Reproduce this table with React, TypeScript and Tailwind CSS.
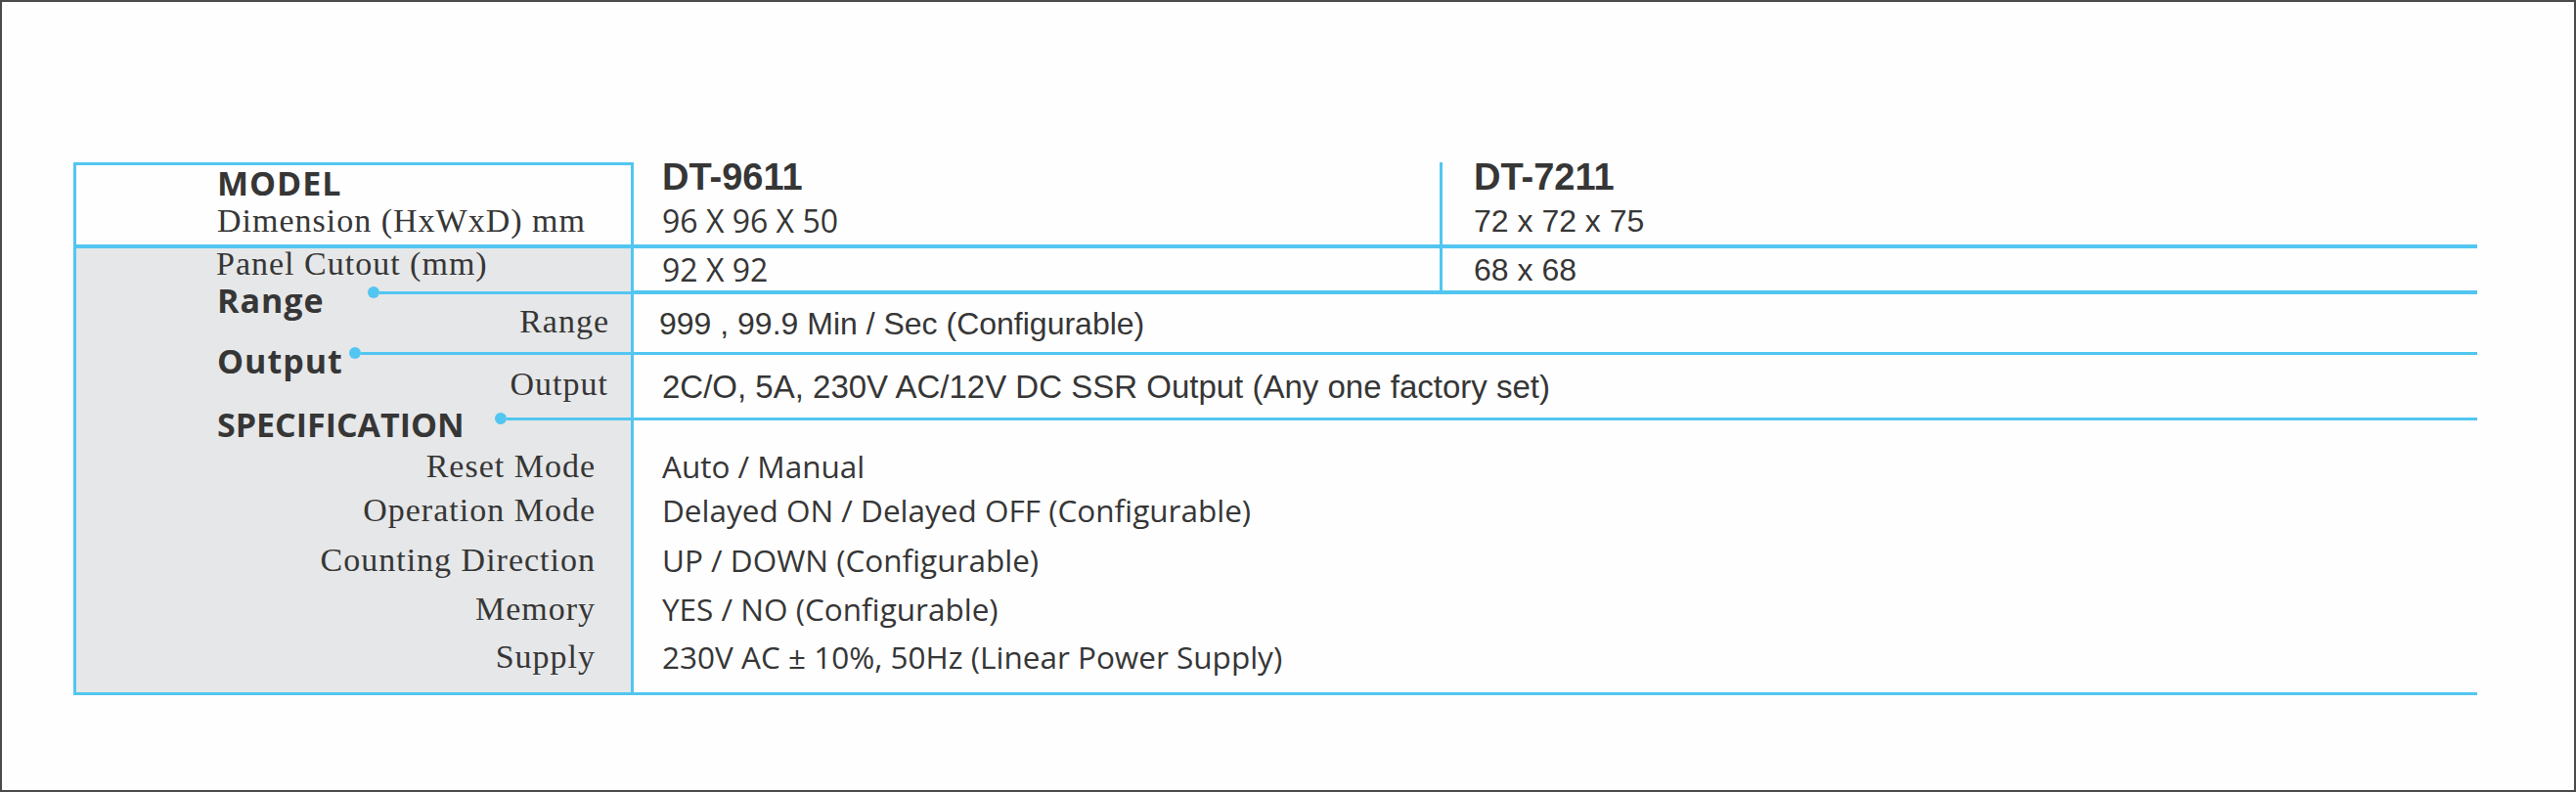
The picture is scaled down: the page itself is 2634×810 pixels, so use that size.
import React from "react";

const serif =
  "font-['Liberation_Serif','Times_New_Roman',serif] text-[34px] tracking-[1px] text-[#363636] leading-none whitespace-nowrap";
const boldSans =
  "font-['Open_Sans',sans-serif] font-bold text-[34px] tracking-[1px] text-[#363636] leading-none whitespace-nowrap";
const boldSansTight =
  "font-['Open_Sans',sans-serif] font-bold text-[34px] tracking-[0px] text-[#363636] leading-none whitespace-nowrap";
const arial =
  "font-['Liberation_Sans',Arial,sans-serif] text-[32px] text-[#363636] leading-none whitespace-nowrap";
const arialWide =
  "font-['Liberation_Sans',Arial,sans-serif] text-[33px] text-[#363636] leading-none whitespace-nowrap";
const arialBold =
  "font-['Liberation_Sans',Arial,sans-serif] font-bold text-[38px] text-[#363636] leading-none whitespace-nowrap";
const open =
  "font-['Open_Sans',sans-serif] text-[31.5px] text-[#363636] leading-none whitespace-nowrap";
const openDim =
  "font-['Open_Sans',sans-serif] text-[32px] text-[#363636] leading-none whitespace-nowrap";

function Header({
  label,
  width,
  lift,
  textClass,
}: {
  label: string;
  width: string;
  lift: string;
  textClass: string;
}) {
  return (
    <div className="h-[24px] flex items-center pl-[144px]">
      <div className={`${width} shrink-0 ${textClass}`}>{label}</div>
      <div className={`flex-1 flex items-center ${lift}`}>
        <span className="w-[12px] h-[12px] rounded-full bg-[#52c6f0] shrink-0" />
        <span className="flex-1 h-[3px] bg-[#52c6f0]" />
      </div>
    </div>
  );
}

export default function App() {
  return (
    <div className="w-[2634px] h-[810px] border-2 border-[#4a4a4a] bg-[#fefefe] pl-[73px] pt-[164px]">
      <div className="flex h-[545px]">
        {/* Label column */}
        <div className="w-[573px] shrink-0 border-[3px] border-[#52c6f0] flex flex-col">
          <div className="h-[85px] shrink-0 border-b-4 border-[#52c6f0] bg-[#fefefe] pl-[144px] flex flex-col">
            <div className={`mt-[6px] h-[24px] flex items-center ${boldSans}`}>MODEL</div>
            <div className={`mt-[15px] h-[24px] flex items-center ${serif}`}>Dimension (HxWxD) mm</div>
          </div>
          <div className="flex-1 bg-[#e6e7e8] flex flex-col">
            <div className={`mt-[4px] h-[24px] flex items-center pl-[143px] ${serif}`}>Panel Cutout (mm)</div>
            <div className="mt-[13px]">
              <Header label="Range" width="w-[154px]" lift="mb-[16px]" textClass={boldSans} />
            </div>
            <div className={`-mt-[2px] h-[24px] flex items-center justify-end pr-[22px] ${serif}`}>Range</div>
            <div className="mt-[16px]">
              <Header label="Output" width="w-[135px]" lift="mb-[16px]" textClass={boldSans} />
            </div>
            <div className={`h-[24px] flex items-center justify-end pr-[23px] ${serif}`}>Output</div>
            <div className="mt-[17px]">
              <Header label="SPECIFICATION" width="w-[284px]" lift="mb-[12px]" textClass={boldSansTight} />
            </div>
            <div className={`mt-[19px] h-[24px] flex items-center justify-end pr-[36px] ${serif}`}>Reset Mode</div>
            <div className={`mt-[21px] h-[24px] flex items-center justify-end pr-[36px] ${serif}`}>Operation Mode</div>
            <div className={`mt-[27px] h-[24px] flex items-center justify-end pr-[36px] ${serif}`}>Counting Direction</div>
            <div className={`mt-[26px] h-[24px] flex items-center justify-end pr-[36px] ${serif}`}>Memory</div>
            <div className={`mt-[25px] h-[24px] flex items-center justify-end pr-[36px] ${serif}`}>Supply</div>
          </div>
        </div>

        {/* Values */}
        <div className="w-[1885px] shrink-0 flex flex-col">
          <div className="h-[88px] shrink-0 flex border-b-4 border-[#52c6f0]">
            <div className="w-[827px] shrink-0 border-r-[3px] border-[#52c6f0] pl-[29px] flex flex-col">
              <div className={`mt-[3px] h-[24px] flex items-center ${arialBold}`}>DT-9611</div>
              <div className={`mt-[21px] h-[24px] flex items-center ${openDim}`}>96 X 96 X 50</div>
            </div>
            <div className="flex-1 pl-[32px] flex flex-col">
              <div className={`mt-[3px] h-[24px] flex items-center ${arialBold}`}>DT-7211</div>
              <div className={`mt-[21px] h-[24px] flex items-center ${arial}`}>72 x 72 x 75</div>
            </div>
          </div>
          <div className="h-[47px] shrink-0 flex border-b-4 border-[#52c6f0]">
            <div className={`w-[827px] shrink-0 border-r-[3px] border-[#52c6f0] pl-[29px] flex items-center ${openDim}`}>92 X 92</div>
            <div className={`flex-1 pl-[32px] flex items-center ${arial}`}>68 x 68</div>
          </div>
          <div className={`h-[62px] shrink-0 border-b-[3px] border-[#52c6f0] pl-[26px] flex items-center ${arial}`}>
            999 , 99.9 Min / Sec (Configurable)
          </div>
          <div className={`h-[67px] shrink-0 border-b-[3px] border-[#52c6f0] pl-[29px] flex items-center ${arialWide}`}>
            2C/O, 5A, 230V AC/12V DC SSR Output (Any one factory set)
          </div>
          <div className="h-[281px] shrink-0 border-b-[3px] border-[#52c6f0] pl-[29px] flex flex-col">
            <div className={`mt-[35px] h-[24px] flex items-center ${open}`}>Auto / Manual</div>
            <div className={`mt-[21px] h-[24px] flex items-center ${open}`}>Delayed ON / Delayed OFF (Configurable)</div>
            <div className={`mt-[27px] h-[24px] flex items-center ${open}`}>UP / DOWN (Configurable)</div>
            <div className={`mt-[26px] h-[24px] flex items-center ${open}`}>YES / NO (Configurable)</div>
            <div className={`mt-[25px] h-[24px] flex items-center ${open}`}>230V AC ± 10%, 50Hz (Linear Power Supply)</div>
          </div>
        </div>
      </div>
    </div>
  );
}
